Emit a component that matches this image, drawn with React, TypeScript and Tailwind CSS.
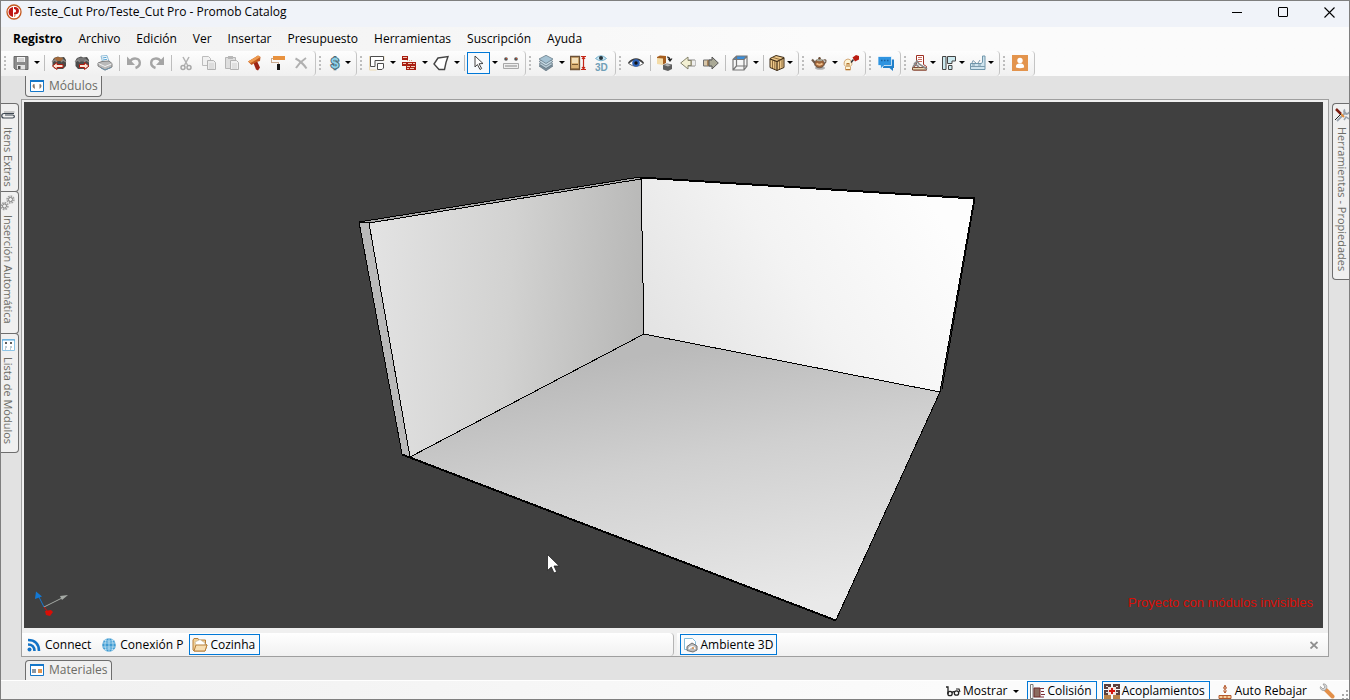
import React from 'react';
import { clsx } from 'clsx';

type IconProps = { children: React.ReactNode; crisp?: boolean };

function Icon({ children, crisp }: IconProps) {
    return (
        <svg width="16" height="16" viewBox="0 0 16 16" fill="none" aria-hidden="true" className="shrink-0" shapeRendering={crisp ? 'crispEdges' : undefined}>
            {children}
        </svg>
    );
}

function Caret() {
    return (
        <svg width="6" height="3" viewBox="0 0 6 3" aria-hidden="true" className="shrink-0">
            <path d="M0 0h6L3 3z" fill="#000" />
        </svg>
    );
}

const icons = {
    save: (
        <Icon>
            <path d="M1 1.500h14v13H2.500L1 13z" fill="#8b8b8b" stroke="#6a6a6a" />
            <path d="M4 2h8v5H4z" fill="#f4f4f4" />
            <path d="M5 4h6M5 6h6" stroke="#b5b5b5" />
            <path d="M4 10h8v4.500H4z" fill="#e3e3e3" />
            <path d="M5 11h2.500v3H5z" fill="#555" />
        </Icon>
    ),
    boxIn: (
        <Icon>
            <path d="M3 3l4-1.500 2 1 4-.5 2 3v6l-3 3H4L1.500 11V5.500z" fill="#4c4a47" />
            <path d="M3 3l4-1 5 1-1 3H5z" fill="#a56a3a" />
            <path d="M1 7l3-2 2 2M10 7l2-2 3 2" stroke="#8b8884" strokeWidth="1.500" />
            <path d="M1.500 11L6 7.500v2h6v3H6v2z" fill="#fbe5d6" stroke="#b01c10" />
        </Icon>
    ),
    boxOut: (
        <Icon>
            <path d="M3 3l4-1.500 2 1 4-.5 2 3v6l-3 3H4L1.500 11V5.500z" fill="#4c4c4c" />
            <path d="M3 3.500l4-1 5 1-1 3H5z" fill="#777" />
            <path d="M1 7l3-2 2 2M10 7l2-2 3 2" stroke="#8b8b8b" strokeWidth="1.500" />
            <path d="M15 11l-4.500-3.500v2h-5v3h5v2z" fill="#fbe5d6" stroke="#b01c10" />
        </Icon>
    ),
    print: (
        <Icon>
            <path d="M4 1l6-.5 2 6-6 2z" fill="#fff" stroke="#8fbbd6" />
            <path d="M5.500 3l4-.7M6 5l4-.7" stroke="#56a5d6" />
            <path d="M1 8l4-1.500 7-.5 3 2.500v3.500l-7 3-7-4z" fill="#b9b9b9" stroke="#7e7e7e" />
            <path d="M1.500 8.500l6.500 3 6.500-2.500" stroke="#f2f2f2" />
            <path d="M4 13l4 2 6-2.500" stroke="#6d94ad" />
        </Icon>
    ),
    undo: (
        <Icon>
            <path d="M4 6.500C7 2 13.500 3 13.800 7.500c.2 3-1.500 4.500-4.300 5.500" stroke="#a5a5a5" strokeWidth="2.400" />
            <path d="M1 1.500v8.500h8z" fill="#a5a5a5" />
        </Icon>
    ),
    redo: (
        <Icon>
            <path d="M12 6.500C9 2 2.500 3 2.200 7.500c-.2 3 1.500 4.500 4.300 5.500" stroke="#a5a5a5" strokeWidth="2.400" />
            <path d="M15 1.500v8.500H7z" fill="#a5a5a5" />
        </Icon>
    ),
    cut: (
        <Icon>
            <path d="M5 2l5 9M11 2L6 11" stroke="#b2b2b2" strokeWidth="1.500" />
            <circle cx="5" cy="12.500" r="2" stroke="#a8a8a8" strokeWidth="1.500" />
            <circle cx="11" cy="12.500" r="2" stroke="#a8a8a8" strokeWidth="1.500" />
        </Icon>
    ),
    copy: (
        <Icon>
            <path d="M1.500 1.500h6l2 2v7h-8z" fill="#f1f1f1" stroke="#bcbcbc" />
            <path d="M6.500 5.500h6l2 2v7h-8z" fill="#ebebeb" stroke="#b2b2b2" />
            <path d="M8 9h5M8 11h5M8 13h5" stroke="#cfcfcf" />
        </Icon>
    ),
    paste: (
        <Icon>
            <path d="M1.500 2.500h10v11h-10z" fill="#dedede" stroke="#b5b5b5" />
            <path d="M4 1h5v3H4z" fill="#b8b8b8" />
            <path d="M6.500 5.500h6l2 2v7h-8z" fill="#f0f0f0" stroke="#b2b2b2" />
            <path d="M8 9h5M8 11h5M8 13h5" stroke="#cfcfcf" />
        </Icon>
    ),
    hammer: (
        <Icon>
            <path d="M6.500 8l3.500-2 3 6.500-2 3-2-1z" fill="#9d2415" />
            <path d="M1 6.500L7 3l4-2.500L13.500 2l-.5 4-3.500 1-5 3z" fill="#c25a20" />
            <path d="M1 6.500L7 3l4-2.500L13.500 2 8 5.500 3.500 8z" fill="#ed9a4f" />
        </Icon>
    ),
    roller: (
        <Icon crisp>
            <path d="M3 1h12v4H3z" fill="#e8923f" />
            <path d="M3 3H1v4h7v3" stroke="#c9a98e" />
            <path d="M7 9h3v6H7z" fill="#161616" />
        </Icon>
    ),
    remove: (
        <Icon>
            <path d="M2.500 3.500c4 2 8 5.500 11 10M13 3c-4 2.500-7.500 6-10 10" stroke="#b0b0b0" strokeWidth="2" />
        </Icon>
    ),
    money: (
        <Icon>
            <text x="8" y="13" textAnchor="middle" fontSize="14" fontWeight="700" fontFamily="Liberation Sans, sans-serif" fill="#8ed3ea" stroke="#4c6b78" strokeWidth="2" paintOrder="stroke">$</text>
        </Icon>
    ),
    plan: (
        <Icon>
            <path d="M.5 1v14h7M15 1v5" stroke="#ecd9b2" />
            <path d="M1.500 1.500h13v4H6v6H1.500z" fill="#fff" stroke="#4d4d4d" />
            <path d="M8.500 8.500h6v4.500l-1.500 1.500H8.500z" fill="#fff" stroke="#4d4d4d" />
        </Icon>
    ),
    bricks: (
        <Icon crisp>
            <path d="M1 1h6v4H1zM1 7h14v8H5v-4H1z" fill="#a81e12" />
            <path d="M2 2h4v1H2zM2 8h3v1H2zM7 8h4v1H7zM12 8h2v1h-2zM6 11h3v1H6zM10 11h4v1h-4zM6 13h2v1H6zM9 13h4v1H9z" fill="#f1c9b6" />
            <path d="M6 5h4v2" stroke="#e2a888" strokeDasharray="1 1" />
        </Icon>
    ),
    shape: (
        <Icon>
            <path d="M5 3l10-1.500-2 6-1.500 7H6L1 9z" fill="#fff" stroke="#444" strokeWidth="1.400" />
        </Icon>
    ),
    pointer: (
        <Icon>
            <path d="M4 1l8 7.500-4 .3 2.700 4.700-1.700 1-2.600-5L4 12z" fill="#fff" stroke="#444" />
        </Icon>
    ),
    measure: (
        <Icon>
            <path d="M.5 8.500h15v5H.5z" fill="#eee" stroke="#a8a8a8" />
            <path d="M3 10v2M5 10v2M7 10v2M9 10v2M11 10v2M13 10v2" stroke="#888" />
            <circle cx="3" cy="4" r="1.800" fill="#555" />
            <circle cx="13" cy="4" r="1.800" fill="#555" />
            <path d="M3 3.500h1M13 3.500h1" stroke="#d64a24" />
        </Icon>
    ),
    layers: (
        <Icon>
            <path d="M1 11l7-4 7 4-7 4.800z" fill="#7a8d99" stroke="#5f7380" strokeWidth=".7" />
            <path d="M1 9l7-4 7 4-7 4.500z" fill="#b9cbd6" stroke="#5f7380" strokeWidth=".7" />
            <path d="M1 6.500l7-4 7 4L8 11z" fill="#c6d9e4" stroke="#5f7380" strokeWidth=".7" />
            <path d="M1 4l7-3.700L15 4 8 8.500z" fill="#a5c2d3" stroke="#5f7380" strokeWidth=".7" />
        </Icon>
    ),
    cabinet: (
        <Icon>
            <path d="M.5 1.500h9v13h-9z" fill="#dcb377" stroke="#6b5138" strokeWidth="1.300" />
            <path d="M2 3h6v5H2z" fill="#f3dfb8" />
            <path d="M2 9.500h6M1 14h8" stroke="#7c5a32" />
            <path d="M13.500 2v12M11 1.500h5M11 14.500h5M12 4l1.500-2L15 4M12 12l1.500 2 1.500-2" stroke="#c42617" strokeWidth="1.200" />
        </Icon>
    ),
    eye3d: (
        <Icon>
            <path d="M2.500 3.500Q8-2 13.500 3.500 8 8 2.500 3.500z" fill="#c8e5f2" stroke="#79b4cf" />
            <circle cx="8" cy="3" r="2" fill="#25343c" />
            <text x="2" y="15.500" fontSize="10" fontWeight="700" fontFamily="Liberation Sans, sans-serif" fill="#709fb7">3D</text>
        </Icon>
    ),
    eye: (
        <Icon>
            <path d="M.5 8.500Q8 1 15.500 8.500 8 14 .5 8.500z" fill="#fff" stroke="#6d6d6d" />
            <path d="M.5 8Q8 0 15.500 8" stroke="#3c3c3c" strokeWidth="1.500" />
            <circle cx="8" cy="8" r="3.800" fill="#2e63b8" />
            <circle cx="8" cy="8" r="1.700" fill="#111" />
        </Icon>
    ),
    cubes: (
        <Icon>
            <path d="M0 2l3-1.500L9 1v7L6 9.500 0 8z" fill="#a65e1f" />
            <path d="M0 3l6 .5V10l-6-1z" fill="#f4dca8" />
            <path d="M6 10l4-1.500 5 1V14l-4 2-5-1.500z" fill="#5e5e5e" />
            <path d="M7 10l3-1 4 1-3 1.500z" fill="#b5b5b5" />
            <path d="M10 2c2 0 3 1 3 3M11 3.500L13 6l2-2.500" stroke="#222" strokeWidth="1.200" />
        </Icon>
    ),
    arrowBack: (
        <Icon>
            <path d="M8 5h7v6H8z" fill="#b5aa8f" stroke="#888" />
            <path d="M12 5.500h3v5h-3z" fill="#eee" />
            <path d="M.7 8L8 2v3.500h3v5H8V14z" fill="#f3f0d3" stroke="#85836d" />
        </Icon>
    ),
    arrowForward: (
        <Icon>
            <path d="M.5 5h8v6h-8z" fill="#d8c7aa" stroke="#6f6f6f" />
            <path d="M4 5h4v6H4z" fill="#a6835b" />
            <path d="M15.300 8L9 2v3H6v6h3v3z" fill="#aaa996" stroke="#555" />
        </Icon>
    ),
    wireCube: (
        <Icon>
            <path d="M1 4.500L4.500 1h10.500L12 4.500z" fill="#3a8edb" />
            <path d="M1 4.500h11V15H1zM1 4.500L4.500 1H15v10l-3 4M12 4.500L15 1M4.500 1v10H15M4.500 11L1 15" stroke="#777" strokeWidth="1.200" />
        </Icon>
    ),
    crate: (
        <Icon>
            <path d="M1 3.500l6-3 8 2v10l-7 3-7-3z" fill="#edc88a" stroke="#3e2c17" />
            <path d="M1 4l7 2.500L15 3M8 6.500v9" stroke="#3e2c17" strokeWidth="1.200" />
            <path d="M3.500 5v8M5.800 6v8M10.500 5.500V14M13 4.500v8M4 2.500l7 2" stroke="#76552c" strokeWidth=".8" />
        </Icon>
    ),
    teapot: (
        <Icon>
            <ellipse cx="9" cy="13" rx="5" ry="1.800" fill="#b0b0b0" />
            <path d="M4 8L1 4.500" stroke="#6f5a4a" strokeWidth="2.200" />
            <path d="M12.500 5c3-1 3.500 2 .5 4" stroke="#6f5a4a" strokeWidth="1.200" />
            <ellipse cx="8.500" cy="8.500" rx="5" ry="4.300" fill="#9a6238" stroke="#5c5148" strokeWidth=".8" />
            <path d="M5.500 8.500q3 2.500 6 0" stroke="#f0bd88" strokeWidth="1.800" />
            <ellipse cx="8.500" cy="5" rx="3" ry="1.300" fill="#a9a99a" />
            <circle cx="8.500" cy="3.300" r="1.200" fill="#6b4b33" />
        </Icon>
    ),
    bulb: (
        <Icon>
            <path d="M5 4a4.300 4.300 0 0 1 2.500 7.500V15h-5v-3.500A4.300 4.300 0 0 1 5 4z" fill="#fdf4d5" stroke="#d3a877" />
            <path d="M3 14.500h4M4 12V8l1 1 1-1v4" stroke="#b3742e" />
            <path d="M8 7.500l2.500-3" stroke="#333" strokeWidth="1.500" />
            <path d="M9.500 2.500L13 0l3 1v3.500l-4 2z" fill="#ba1d12" />
        </Icon>
    ),
    chat: (
        <Icon>
            <path d="M5 4.500h11v8.500h-1v3L11.500 13H5z" fill="#1f7ec9" />
            <path d="M0 1.500h13.500v9H6L2.500 14v-3.500H0z" fill="#2f94e0" stroke="#fff" strokeWidth=".7" />
            <path d="M3 5.500h1.500M6 5.500h1.500M9 5.500h1.500" stroke="#1b5f9c" strokeWidth="1.500" />
        </Icon>
    ),
    render: (
        <Icon>
            <path d="M4.500.5h7v9l3 2V15H1.500v-3l3-2z" fill="#fff" stroke="#9e2f22" />
            <path d="M6 2.500h4M6 4.500h4M6 6.500h4" stroke="#c96e61" />
            <path d="M.5 12.500h14V15H.5z" fill="#e4d5b2" stroke="#7b4a32" />
            <path d="M1 12l4-6 2 3 8 5M2 8l5 4" stroke="#8b8b8b" strokeWidth="1.700" />
        </Icon>
    ),
    floor: (
        <Icon>
            <path d="M1.500 1.500h3.500v13H1.500zM6.500 1.500h8v4.500H11v2.500H6.500zM7.500 10.500H11v4H7.500z" fill="#cdeaf0" stroke="#444" />
        </Icon>
    ),
    kitchen: (
        <Icon>
            <path d="M.5 8.500h11l1-1.500V1H15v13.500H.5z" fill="#cfe4ee" stroke="#7096ab" />
            <path d="M.5 11.500H15M2 8l1-2.500 3 2.500M8 8l2-3M2 10h3M8 10h3" stroke="#7d9cae" />
        </Icon>
    ),
    user: (
        <Icon>
            <path d="M0 0h16v16H0z" fill="#e3944d" />
            <circle cx="8" cy="5.500" r="2.700" fill="#fff" />
            <path d="M4 12.500C3.500 9 6 8.500 8 8.500s4.500.5 4 4Q8 14 4 12.500z" fill="#fff" />
        </Icon>
    ),
    clip: (
        <Icon>
            <path d="M14 6.500H4C1 6.500 1 11 4 11h8.500c2.500 0 2.500-3 0-3H5" stroke="#3c4650" strokeWidth="1.200" />
            <path d="M14.500 5H4" stroke="#9a9a9a" />
        </Icon>
    ),
    gears: (
        <Icon>
            <circle cx="10.500" cy="4.500" r="3" stroke="#a2a2a2" strokeWidth="2.500" strokeDasharray="1.500 .8" />
            <circle cx="10.500" cy="4.500" r="2" stroke="#8b8b8b" />
            <circle cx="4.500" cy="11" r="3" stroke="#a2a2a2" strokeWidth="2.500" strokeDasharray="1.500 .8" />
            <circle cx="4.500" cy="11" r="2" stroke="#8b8b8b" />
        </Icon>
    ),
    moduleList: (
        <Icon>
            <path d="M2.500 2.500h12v11h-12z" fill="#fff" stroke="#8cc4e6" />
            <path d="M2 3h13" stroke="#4ea2d8" />
            <path d="M5 5h2v2H5zM10 5h2v2h-2z" fill="#5d5d5d" />
            <path d="M5 10h2M10 10h2M5 12h1M10 12h1" stroke="#7b98a8" />
        </Icon>
    ),
    tools: (
        <Icon>
            <path d="M3 14l9-9M11 2.500a2.500 2.500 0 1 0 4 2.500" stroke="#9aa3ad" strokeWidth="1.800" />
            <path d="M2 2l5 5" stroke="#7e1d12" strokeWidth="2.500" />
            <path d="M7 7l3 3" stroke="#e08c3c" strokeWidth="2" />
            <path d="M1 13l6-6" stroke="#222" />
            <path d="M10 13l2-3 3 2" stroke="#9aa3ad" strokeWidth="1.500" />
        </Icon>
    ),
    modules: (
        <Icon>
            <path d="M1.500 2.500h13v11h-13z" fill="#fff" stroke="#1577c9" />
            <path d="M1 3h14" stroke="#1577c9" strokeWidth="2" />
            <path d="M5.500 6C3.500 6 3 8 4 9.500L6 11zM10.500 6c2 0 2.500 2 1.500 3.500L10.500 11z" fill="#8a7768" />
        </Icon>
    ),
    materials: (
        <Icon>
            <path d="M1.500 2.500h13v11h-13z" fill="#fff" stroke="#1577c9" />
            <path d="M1 3h14" stroke="#1577c9" strokeWidth="2" />
            <path d="M3 7h4v4H3z" fill="#8a97a3" />
            <path d="M9 7h4v4H9z" fill="#e3964f" />
        </Icon>
    ),
    feed: (
        <Icon>
            <path d="M2 3c7 0 11 4 11 11M2 7.500c4 0 6.500 2.500 6.500 6.500" stroke="#1373c6" strokeWidth="2.600" />
            <circle cx="3.500" cy="12.500" r="2" fill="#1373c6" />
        </Icon>
    ),
    globe: (
        <Icon>
            <circle cx="8" cy="8" r="6.800" fill="#3d9ad2" />
            <path d="M1.500 6h13M1.500 10h13M8 1v14M3 3c3 1.500 7 1.500 10 0M3 13c3-1.500 7-1.500 10 0M5.500 1.500c-2 4-2 9 0 13M10.500 1.500c2 4 2 9 0 13" stroke="#d5ecf8" strokeWidth=".7" />
        </Icon>
    ),
    folder: (
        <Icon>
            <path d="M1 3l1-1.500h4L7 3h6.500v4L15 8l-2 6H2L1 13z" fill="#f2ce94" stroke="#b6803d" />
            <path d="M3 5l5-2.500L13 6v3H4z" fill="#fff" stroke="#c4b497" strokeWidth=".7" />
            <path d="M4 8h11l-2 6H2z" fill="#f7deb3" stroke="#b6803d" />
        </Icon>
    ),
    ambient: (
        <Icon>
            <path d="M1.500 1.500h8l3 3v8h-11z" fill="#fff" stroke="#84bddb" />
            <path d="M4 9.500L9 6l5 3v4l-4 2-6-1.500z" fill="#bdbdbd" stroke="#717171" />
            <path d="M6 12c1-3 5-3 6 0" stroke="#fff" strokeWidth="1.500" />
            <circle cx="10" cy="11" r="1" fill="#d98b45" />
        </Icon>
    ),
    glasses: (
        <Icon>
            <path d="M1 4h2v7" stroke="#222" strokeWidth="1.300" />
            <circle cx="5" cy="10.500" r="2.200" stroke="#222" strokeWidth="1.300" />
            <circle cx="11.500" cy="10" r="2.200" stroke="#222" strokeWidth="1.300" />
            <path d="M7 9.500c1-1 2-1 2.500-.5M11 6h3l1 3" stroke="#222" strokeWidth="1.200" />
        </Icon>
    ),
    collision: (
        <Icon>
            <path d="M1.500 1.500h2.500v14H1.500z" fill="#fff" stroke="#777" />
            <path d="M5 5h6v9H5z" fill="#8b6c60" stroke="#6e2a2a" />
            <path d="M11 5.500h4M12 8.500h3M12 11.500h4M11 14h4" stroke="#7c2d34" />
        </Icon>
    ),
    couplings: (
        <Icon crisp>
            <path d="M0 1h7v5H0zM9 1h7v5H9zM0 7h7v5H0zM9 7h7v5H9z" fill="#5c403e" />
            <path d="M0 12h7v4H0zM9 12h7v4H9z" fill="#b98249" />
            <path d="M2 3h2v1H2zM12 3h2v1h-2zM2 9h2v1H2zM12 9h2v1h-2z" fill="#ddd" />
            <path d="M4 4h8v8H4z" fill="#f3e4e0" />
            <path d="M7 5h2v6H7zM5 7h6v2H5z" fill="#d4140c" />
        </Icon>
    ),
    lower: (
        <Icon>
            <path d="M8 2v8M6.500 7.500L8 10l1.500-2.500M8 2.500L6.500 5 8 6.500 9.500 5z" stroke="#b5582a" />
            <path d="M2 12.500h12v3H2z" fill="#f5cf9c" stroke="#b5582a" />
            <path d="M6 13v3M10 13v3" stroke="#b5582a" />
        </Icon>
    ),
    wrench: (
        <Icon>
            <path d="M7 7l6.500 6.500" stroke="#e3904a" strokeWidth="4" strokeLinecap="round" />
            <path d="M1.500 3.500L4 6l2-2-2-3C7 .5 8.500 3 7.500 5.500L6 7.500C3 8 .5 6 1.500 3.500z" fill="#d5d5d5" stroke="#999" strokeWidth=".8" />
        </Icon>
    ),
};

type IconName = keyof typeof icons;
type ToolItem = {
    icon?: IconName;
    label?: string;
    kind: 'button' | 'split' | 'dropdown' | 'sep';
    active?: boolean;
};

const btn = (icon: IconName, label: string): ToolItem => ({ kind: 'button', icon, label });
const split = (icon: IconName, label: string, active = false): ToolItem => ({ kind: 'split', icon, label, active });
const drop = (icon: IconName, label: string): ToolItem => ({ kind: 'dropdown', icon, label });
const sep: ToolItem = { kind: 'sep' };

const toolbars: ToolItem[][] = [
    [
        split('save', 'Guardar'), sep,
        btn('boxIn', 'Importar'), btn('boxOut', 'Exportar'), btn('print', 'Imprimir'), sep,
        btn('undo', 'Deshacer'), btn('redo', 'Rehacer'), sep,
        btn('cut', 'Cortar'), btn('copy', 'Copiar'), btn('paste', 'Pegar'),
        btn('hammer', 'Construir'), btn('roller', 'Pintar'), btn('remove', 'Eliminar'),
    ],
    [drop('money', 'Presupuesto')],
    [split('plan', 'Ambiente'), split('bricks', 'Paredes'), split('shape', 'Formas'), sep, split('pointer', 'Seleccionar', true), btn('measure', 'Medir')],
    [split('layers', 'Capas'), btn('cabinet', 'Dimensiones'), btn('eye3d', 'Vista 3D')],
    [
        btn('eye', 'Visualizar'), sep,
        btn('cubes', 'Reemplazar'), btn('arrowBack', 'Anterior'), btn('arrowForward', 'Siguiente'), sep,
        split('wireCube', 'Vistas'), sep,
        drop('crate', 'Textura'),
    ],
    [split('teapot', 'Render'), btn('bulb', 'Luces')],
    [btn('chat', 'Mensajes')],
    [drop('render', 'Informe'), drop('floor', 'Planta'), drop('kitchen', 'Elevaciones')],
    [btn('user', 'Usuario')],
];

const menus = ['Registro', 'Archivo', 'Edición', 'Ver', 'Insertar', 'Presupuesto', 'Herramientas', 'Suscripción', 'Ayuda'];

const sideTabs: { icon: IconName; label: string; size: string }[] = [
    { icon: 'clip', label: 'Itens Extras', size: 'h-[89px]' },
    { icon: 'gears', label: 'Inserción Automática', size: 'h-[143px]' },
    { icon: 'moduleList', label: 'Lista de Módulos', size: 'h-[120px]' },
];

function TitleBar() {
    return (
        <header className="flex h-[26px] items-center bg-[#f0f3f9] pl-[5px] pr-[7px]">
            <svg width="16" height="16" viewBox="0 0 16 16" aria-hidden="true" className="mb-1">
                <circle cx="8" cy="8" r="7" fill="#fff" stroke="#c4581f" strokeWidth="1.300" />
                <path d="M7 3v10C4 12.500 2.500 10.500 2.500 8S4 3.500 7 3z" fill="#c01714" />
                <path d="M8 3c4 0 5 2 5 4 0 2.500-2 3.500-5 3.500V8.500c1.500 0 2-.5 2-1.500S9.500 5 8 5z" fill="#c01714" />
                <path d="M8 10.500h2L9 13H8z" fill="#e69b76" />
            </svg>
            <h1 className="mb-1 ml-1.5 flex-1 whitespace-nowrap">Teste_Cut Pro/Teste_Cut Pro - Promob Catalog</h1>
            <div className="mb-1 flex gap-5">
                <button aria-label="Minimizar" className="flex h-5 w-[26px] items-center justify-center">
                    <svg width="11" height="11" viewBox="0 0 11 11" fill="none"><path d="M0 5.500h10" stroke="#000" /></svg>
                </button>
                <button aria-label="Maximizar" className="flex h-5 w-[26px] items-center justify-center">
                    <svg width="11" height="11" viewBox="0 0 11 11" fill="none"><rect x=".5" y=".5" width="9" height="9" rx=".5" stroke="#000" /></svg>
                </button>
                <button aria-label="Cerrar" className="flex h-5 w-[26px] items-center justify-center">
                    <svg width="11" height="11" viewBox="0 0 11 11" fill="none"><path d="M.5.500l10 10M10.500.5l-10 10" stroke="#000" strokeWidth="1.100" /></svg>
                </button>
            </div>
        </header>
    );
}

function Grip() {
    return (
        <div className="flex w-2 shrink-0 flex-col items-center gap-0.5">
            {[0, 1, 2, 3].map(i => <span key={i} className="h-0.5 w-0.5 bg-[#bdbdbd]" />)}
        </div>
    );
}

function Tool({ item }: { item: ToolItem }) {
    if (item.kind === 'sep' || !item.icon) {
        return <div className="mx-auto flex w-1.5 justify-center"><span className="h-4 w-px bg-[#bdbdbd]" /></div>;
    }
    if (item.kind === 'dropdown') {
        return (
            <button aria-label={item.label} className="flex h-[22px] w-[29px] items-center gap-0.5 pl-[3px]">
                {icons[item.icon]}
                <Caret />
            </button>
        );
    }
    return (
        <div className="flex items-center">
            <button
                aria-label={item.label}
                className={clsx('flex h-[22px] w-[23px] items-center justify-center', item.active && 'border border-[#0078d7] bg-[#f7fafd]')}
            >
                {icons[item.icon]}
            </button>
            {item.kind === 'split' && (
                <button aria-label={`${item.label}: opciones`} className="flex h-[22px] w-[9px] items-center justify-center"><Caret /></button>
            )}
        </div>
    );
}

function Room() {
    return (
        <svg viewBox="0 0 1299 526" className="block h-full w-full" role="img" aria-label="Ambiente 3D">
            <defs>
                <linearGradient id="leftWall" gradientUnits="userSpaceOnUse" x1="350" y1="170" x2="622" y2="190">
                    <stop offset="0" stopColor="#e2e2e2" />
                    <stop offset=".5" stopColor="#d2d2d1" />
                    <stop offset="1" stopColor="#b7b7b6" />
                </linearGradient>
                <linearGradient id="backWall" gradientUnits="userSpaceOnUse" x1="640" y1="260" x2="900" y2="90">
                    <stop offset="0" stopColor="#e3e3e3" />
                    <stop offset=".5" stopColor="#f3f3f3" />
                    <stop offset="1" stopColor="#fdfdfd" />
                </linearGradient>
                <linearGradient id="floorShade" gradientUnits="userSpaceOnUse" x1="690" y1="240" x2="740" y2="510">
                    <stop offset="0" stopColor="#bababa" />
                    <stop offset=".4" stopColor="#d0d0d0" />
                    <stop offset="1" stopColor="#e9e9e9" />
                </linearGradient>
            </defs>
            <g stroke="#000" strokeLinejoin="round" shapeRendering="crispEdges">
                <path d="M335 120L345 121 386 355 378 352z" fill="#b9b9b9" />
                <path d="M345 121L617 76 620 232 386 355z" fill="url(#leftWall)" />
                <path d="M335 120L616 75 617 77 345 121z" fill="#a9a9a9" />
                <path d="M617 76L950 97 916 290 620 232z" fill="url(#backWall)" />
                <path d="M620 232L916 290 812 518 386 355z" fill="url(#floorShade)" />
                <path d="M616 75L951 96 918 287M378 353L812 519" fill="none" />
            </g>
            <path d="M523.500 452.500v16l3.800-3.500 2.700 6 2.700-1.200-2.700-5.800h5.200z" fill="#fff" stroke="#222" strokeWidth=".8" />
        </svg>
    );
}

function Viewport() {
    return (
        <section className="relative min-h-0 flex-1 overflow-hidden bg-[#404040]">
            <div className="absolute inset-0"><Room /></div>
            <svg width="34" height="26" viewBox="0 0 34 26" className="absolute bottom-3 left-[11px]" fill="none" aria-hidden="true">
                <path d="M9 17L4 7" stroke="#1378d4" />
                <path d="M0 9L1 1.500 7 6.500z" fill="#1378d4" />
                <path d="M9 17l18-9" stroke="#a5aaa5" />
                <path d="M25 6l8-1-6 5z" fill="#a5aaa5" />
                <path d="M9 17l4 5" stroke="#d90e06" />
                <path d="M10 21l6-1 2 2-3 4-4-1z" fill="#d90e06" />
            </svg>
            <p className="absolute bottom-4 right-2.5 font-['Liberation_Sans',sans-serif] text-[13px] leading-[18px] text-[#d90e06]">Proyecto con módulos invisibles</p>
        </section>
    );
}

function DocumentStrip() {
    return (
        <div className="mt-[5px] grid h-[23px] shrink-0 grid-cols-2 gap-[3px]">
            <div className="flex items-center rounded-r-sm border-r border-[#b5b5b5] bg-linear-to-b from-white to-[#f1f1f1] pl-1">
                <button className="flex h-[21px] items-center gap-[3px] pr-2.5">{icons.feed}Connect</button>
                <button className="flex h-[21px] items-center gap-[3px] pr-1.5">{icons.globe}Conexión P</button>
                <button className="flex h-[21px] items-center gap-0.5 border border-[#0078d7] bg-[#f7fafd] pl-0.5 pr-1">{icons.folder}Cozinha</button>
            </div>
            <div className="flex items-center bg-linear-to-b from-white to-[#f1f1f1] pl-[3px] pr-1.5">
                <button className="flex h-[21px] items-center gap-0.5 border border-[#0078d7] bg-[#f7fafd] pl-0.5 pr-[3px]">{icons.ambient}Ambiente 3D</button>
                <button aria-label="Cerrar ambiente" className="ml-auto flex h-4 w-4 items-center justify-center">
                    <svg width="8" height="8" viewBox="0 0 8 8" fill="none"><path d="M.5 1l7 6.500M7.500 1l-7 6.500" stroke="#8f8f8f" strokeWidth="1.800" /></svg>
                </button>
            </div>
        </div>
    );
}

function StatusBar() {
    return (
        <footer className="flex h-[19px] items-start justify-end overflow-hidden border-t border-white bg-linear-to-r from-[#f0f0f0] to-[#fbfbfb] to-70%">
            <button className="mr-2 flex h-5 items-center gap-0.5">
                {icons.glasses}
                <span className="mr-1">Mostrar</span>
                <Caret />
            </button>
            <button className="mr-[5px] flex h-5 items-center gap-0.5 border border-[#0078d7] bg-[#f7fafd] pl-px pr-1">{icons.collision}Colisión</button>
            <button className="mr-[5px] flex h-5 items-center gap-0.5 border border-[#0078d7] bg-[#f7fafd] pl-px pr-1">{icons.couplings}Acoplamientos</button>
            <button className="mr-3 flex h-5 items-center gap-0.5 pl-0.5">{icons.lower}Auto Rebajar</button>
            <button aria-label="Configuración" className="flex h-5 items-center">{icons.wrench}</button>
            <svg width="10" height="10" viewBox="0 0 10 10" className="ml-1 mt-2" aria-hidden="true">
                <path d="M7 1h2v2H7zM7 5h2v2H7zM3 5h2v2H3zM7 9h2v1H7zM3 9h2v1H3z" fill="#a8a8a8" />
            </svg>
        </footer>
    );
}

export default function App() {
    return (
        <div className="flex h-screen flex-col overflow-hidden border border-[#7f7f7f] bg-[#e2e2e2] font-['Open_Sans','Noto_Sans',sans-serif] text-[12px] leading-4 text-black">
            <TitleBar />
            <div className="bg-linear-to-r from-[#f0f0f0] to-[#fbfbfb] to-60%">
                <nav className="flex h-6 items-center gap-4 pl-3">
                    {menus.map((menu, i) => (
                        <button key={menu} className={clsx('whitespace-nowrap', i === 0 && 'font-bold')}>{menu}</button>
                    ))}
                </nav>
                <div className="flex h-[25px]">
                    {toolbars.map((items, i) => (
                        <div key={i} role="toolbar" className="flex shrink-0 items-center rounded-r-sm border-r border-[#c4c4c4] bg-linear-to-b from-[#fdfdfd] to-[#f0f0f0] pb-0.5 pr-[3px]">
                            <Grip />
                            {items.map((item, j) => <Tool key={j} item={item} />)}
                        </div>
                    ))}
                </div>
            </div>

            <div className="flex min-h-0 flex-1">
                <aside className="w-5 shrink-0 pt-[27px]">
                    {sideTabs.map(tab => (
                        <button
                            key={tab.label}
                            className={clsx('-mb-px flex w-[18px] flex-col items-center gap-1 rounded-r-[4px] border border-l-0 border-[#6e6e6e] bg-[#f0f0f0] pr-[3px] pt-[3px] text-[11px] text-[#6c6c66]', tab.size)}
                        >
                            {icons[tab.icon]}
                            <span className="whitespace-nowrap [writing-mode:vertical-rl]">{tab.label}</span>
                        </button>
                    ))}
                </aside>

                <main className="flex min-w-0 flex-1 flex-col">
                    <div className="flex h-[23px] shrink-0 items-start pl-1">
                        <button className="flex h-[21px] items-center gap-1 rounded-b-[4px] border border-t-0 border-[#6e6e6e] bg-[#f0f0f0] px-[3px] text-[#6c6c66]">
                            {icons.modules}Módulos
                        </button>
                    </div>
                    <div className="flex min-h-0 flex-1 flex-col border border-[#9f9f9f] bg-[#f0f0f0] pt-0.5">
                        <div className="flex min-h-0 flex-1 pl-0.5 pr-[5px]"><Viewport /></div>
                        <DocumentStrip />
                    </div>
                    <div className="flex h-[23px] shrink-0 items-end pl-1">
                        <button className="flex h-5 items-center gap-1 rounded-t-[4px] border border-b-0 border-[#6e6e6e] bg-[#f0f0f0] px-[3px] pb-0.5 text-[#6c6c66]">
                            {icons.materials}Materiales
                        </button>
                    </div>
                </main>

                <aside className="flex w-5 shrink-0 items-start justify-end pt-[27px]">
                    <button className="flex h-[177px] w-[17px] flex-col items-center gap-1 rounded-l-[4px] border border-r-0 border-[#6e6e6e] bg-[#f0f0f0] pl-0.5 pt-[3px] text-[11px] text-[#6c6c66]">
                        {icons.tools}
                        <span className="whitespace-nowrap [writing-mode:vertical-rl]">Herramientas - Propiedades</span>
                    </button>
                </aside>
            </div>

            <StatusBar />
        </div>
    );
}
